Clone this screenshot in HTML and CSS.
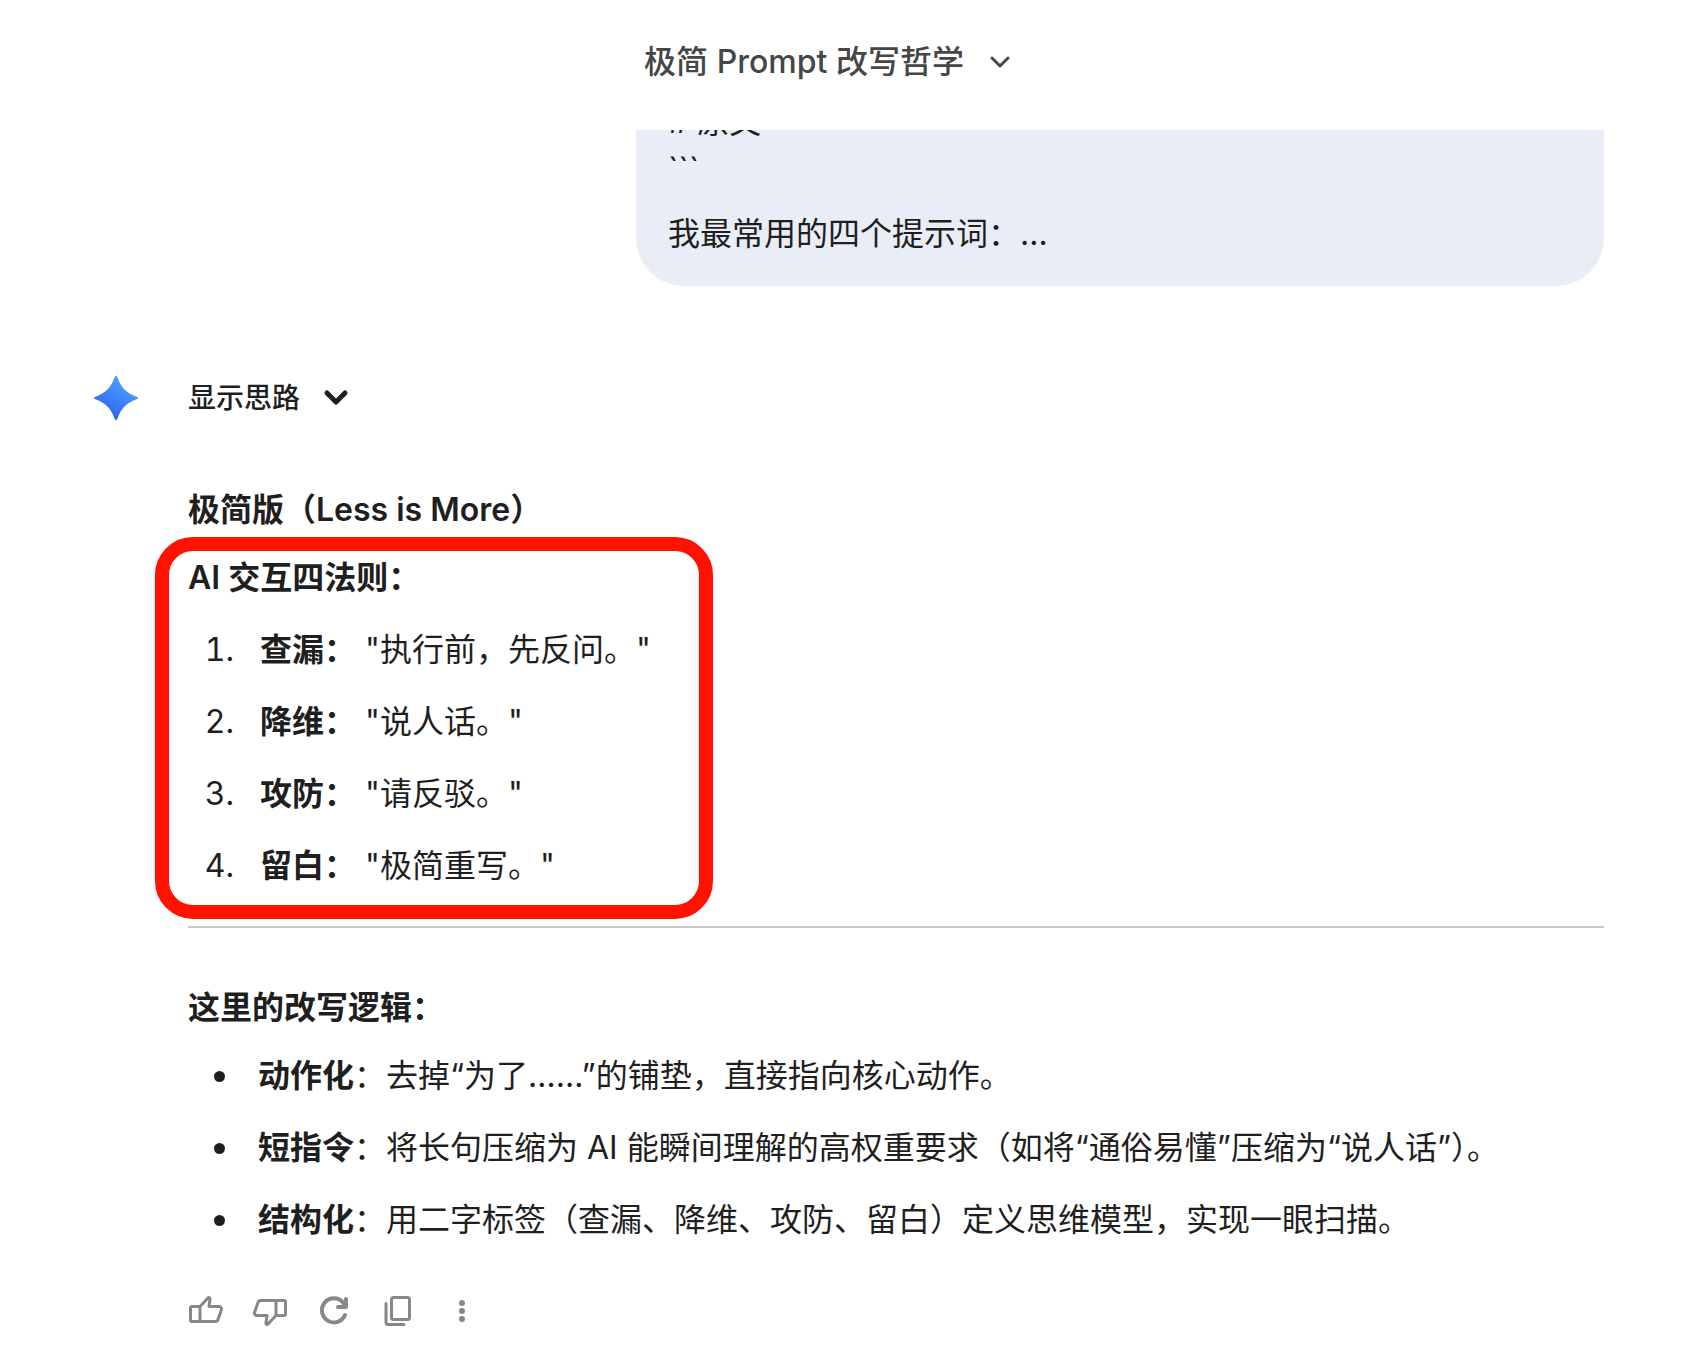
FILE: index.html
```html
<!DOCTYPE html>
<html lang="zh-CN">
<head>
    <meta charset="UTF-8">
    <meta name="viewport" content="width=device-width, initial-scale=1.0">
    <title>极简 Prompt 改写哲学</title>
    <link rel="stylesheet" href="styles.css">
</head>
<body>
    <header class="topbar">
        <button class="title-button" type="button">
            <span>极简 Prompt 改写哲学</span>
            <svg class="chevron" width="24" height="24" viewBox="0 0 24 24"><path d="M4 8l8 8 8-8"/></svg>
        </button>
    </header>

    <main class="chat">
        <div class="user-query">
            <p># 原文<br>```</p>
            <p>我最常用的四个提示词：...</p>
        </div>

        <div class="response">
            <svg class="avatar" width="44" height="44" viewBox="0 0 44 44">
                <defs>
                    <linearGradient id="spark" x1="0.25" y1="0.9" x2="0.75" y2="0.1">
                        <stop offset="0" stop-color="#2f62ea"/>
                        <stop offset="0.5" stop-color="#3c83fb"/>
                        <stop offset="1" stop-color="#4fa3ff"/>
                    </linearGradient>
                </defs>
                <path fill="url(#spark)" d="M22 0c.8 0 1.2.6 1.5 1.5C27 11.500 32.500 17 42.500 20.700c.9.2 1.500.6 1.500 1.300s-.6 1.100-1.500 1.300C32.500 27 27 32.500 23.500 42.500c-.3.9-.7 1.500-1.500 1.500s-1.200-.6-1.500-1.500C17 32.500 11.500 27 1.500 23.300.6 23.100 0 22.700 0 22s.6-1.100 1.500-1.300C11.500 17 17 11.500 20.500 1.500 20.800.6 21.200 0 22 0z"/>
            </svg>

            <div class="content">
                <button class="thoughts-button" type="button">
                    <span>显示思路</span>
                    <svg class="chevron" width="28" height="28" viewBox="0 0 28 28"><path d="M5 9l9 9 9-9"/></svg>
                </button>

                <h3>极简版（Less is More）</h3>

                <section class="rules">
                    <h3>AI 交互四法则：</h3>
                    <ol>
                        <li><b>查漏：</b> "执行前，先反问。"</li>
                        <li><b>降维：</b> "说人话。"</li>
                        <li><b>攻防：</b> "请反驳。"</li>
                        <li><b>留白：</b> "极简重写。"</li>
                    </ol>
                </section>

                <hr>

                <h3>这里的改写逻辑：</h3>
                <ul>
                    <li><b>动作化</b>：去掉“为了……”的铺垫，直接指向核心动作。</li>
                    <li><b>短指令</b>：将长句压缩为 AI 能瞬间理解的高权重要求（如将“通俗易懂”压缩为“说人话”）。</li>
                    <li><b>结构化</b>：用二字标签（查漏、降维、攻防、留白）定义思维模型，实现一眼扫描。</li>
                </ul>

                <div class="actions">
                    <button type="button" aria-label="赞">
                        <svg width="36" height="36" viewBox="0 0 36 36"><path d="M4 13.500h8v15H4a1.500 1.500 0 0 1-1.500-1.500V15A1.500 1.500 0 0 1 4 13.500zM12 13.500l8-8.500c.8-.9 2.200-.4 2 1L21 13.500h10a2.500 2.500 0 0 1 2.400 3.200l-3.500 10a2.500 2.500 0 0 1-2.400 1.800H12"/></svg>
                    </button>
                    <button type="button" aria-label="踩">
                        <svg width="36" height="36" viewBox="0 0 36 36"><path d="M32 22.500h-8v-15h8A1.500 1.500 0 0 1 33.500 9v12a1.500 1.500 0 0 1-1.500 1.500zM24 22.500l-8 8.500c-.8.900-2.200.400-2-1l1-7.500H5a2.500 2.500 0 0 1-2.400-3.200l3.500-10A2.500 2.500 0 0 1 8.500 7.500H24"/></svg>
                    </button>
                    <button type="button" aria-label="重做">
                        <svg class="thick" width="36" height="36" viewBox="0 0 36 36"><path d="M29 22a12 12 0 1 1-2-12.500l3 4M30 6v8h-8"/></svg>
                    </button>
                    <button type="button" aria-label="复制">
                        <svg width="36" height="36" viewBox="0 0 36 36"><rect x="11.500" y="4.500" width="18" height="22" rx="2"/><path d="M6 10.500v19a2 2 0 0 0 2 2h16"/></svg>
                    </button>
                    <button type="button" aria-label="更多">
                        <svg class="dots" width="36" height="36" viewBox="0 0 36 36"><circle cx="18" cy="10" r="3"/><circle cx="18" cy="18" r="3"/><circle cx="18" cy="26" r="3"/></svg>
                    </button>
                </div>
            </div>
        </div>
    </main>
</body>
</html>
```
FILE: styles.css
```css
* {
    box-sizing: border-box;
}
body {
    margin: 0;
    background-color: #fff;
    color: #1f1f1f;
    font-family: Inter, "Noto Sans CJK SC", sans-serif;
    font-size: 32px;
    line-height: 48px;
}
button {
    padding: 0;
    border: none;
    background: none;
    color: inherit;
    font: inherit;
    cursor: pointer;
}
p, h3 {
    margin: 0;
    font-size: 32px;
}
h3 {
    font-weight: 600;
}
svg {
    display: block;
    flex-shrink: 0;
}
.chevron {
    fill: none;
    stroke: currentColor;
    stroke-width: 3;
    stroke-linecap: round;
    stroke-linejoin: round;
}
.topbar {
    height: 130px;
    padding-top: 38px;
    display: flex;
    justify-content: center;
    align-items: flex-start;
}
.title-button {
    display: flex;
    align-items: center;
    gap: 24px;
    margin-right: 48px;
    color: #444746;
    font-weight: 500;
}
.chat {
    padding: 0 100px 0 94px;
}
/* the top of the message is scrolled under the top bar */
.user-query {
    display: flex;
    flex-direction: column;
    justify-content: flex-end;
    gap: 16px;
    width: 968px;
    max-width: 100%;
    height: 156px;
    margin-left: auto;
    padding: 0 32px 28px;
    overflow: hidden;
    background-color: #e9edf6;
    border-radius: 0 0 48px 48px;
}
.response {
    display: flex;
    gap: 50px;
    margin-top: 84px;
}
.avatar {
    margin-top: 6px;
}
.content {
    flex: 1;
    min-width: 0;
}
.thoughts-button {
    display: flex;
    align-items: center;
    gap: 22px;
    height: 56px;
    margin-bottom: 60px;
    font-size: 28px;
    font-weight: 500;
}
.thoughts-button .chevron {
    stroke-width: 5;
}
.rules {
    position: relative;
    margin-top: 20px;
}
/* red highlight round the rules */
.rules::after {
    content: "";
    box-sizing: border-box;
    position: absolute;
    top: -17px;
    left: -33px;
    width: 558px;
    height: 382px;
    border: 14px solid #ff1200;
    border-radius: 38px;
    pointer-events: none;
}
ol, ul {
    display: flex;
    flex-direction: column;
    gap: 24px;
    margin: 24px 0 0;
    padding-left: 72px;
    list-style: none;
}
ul {
    margin-top: 20px;
    padding-left: 70px;
}
li {
    position: relative;
}
ol {
    counter-reset: rule;
}
ol li::before {
    counter-increment: rule;
    content: counter(rule) ".";
    position: absolute;
    right: 100%;
    margin-right: 26px;
    font-variant-numeric: tabular-nums;
}
ul li::before {
    content: "";
    position: absolute;
    top: 19px;
    left: -44px;
    width: 11px;
    height: 11px;
    border-radius: 50%;
    background-color: #1f1f1f;
}
hr {
    height: 2px;
    margin: 36px 0 56px;
    border: none;
    background-color: #c4c7c5;
}
.actions {
    display: flex;
    margin: 35px 0 0 -14px;
}
.actions button {
    display: flex;
    justify-content: center;
    align-items: center;
    width: 64px;
    height: 64px;
}
.actions svg {
    fill: none;
    stroke: #868887;
    stroke-width: 3;
    stroke-linecap: round;
    stroke-linejoin: round;
}
.actions .thick {
    stroke-width: 4;
}
.actions .dots {
    fill: #868887;
    stroke: none;
}
```
